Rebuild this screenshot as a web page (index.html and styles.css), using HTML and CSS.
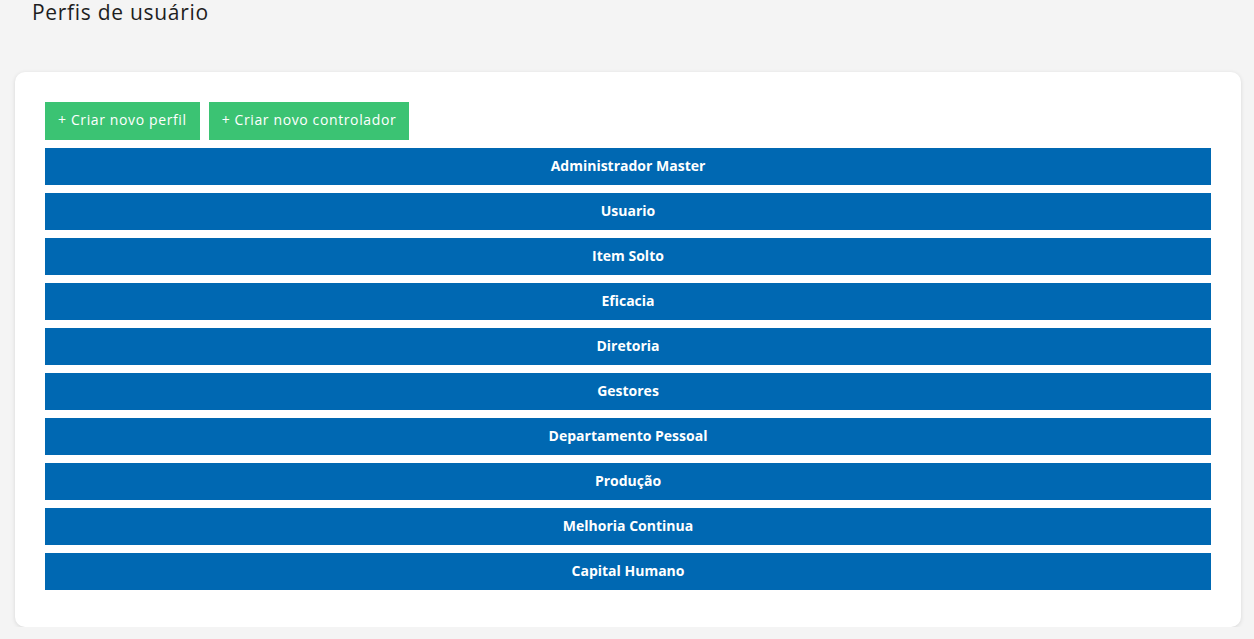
FILE: index.html
```html
<!DOCTYPE html>
<html lang="pt-BR">
<head>
<meta charset="utf-8">
<title>Perfis de usuário</title>
<link rel="stylesheet" href="styles.css">
</head>
<body>
<header class="page-header">
  <h1 class="page-title">Perfis de usuário</h1>
</header>
<main class="card">
  <div class="actions">
    <button class="btn-green">+ Criar novo perfil</button>
    <button class="btn-green">+ Criar novo controlador</button>
  </div>
  <ul class="profile-list">
    <li class="profile">Administrador Master</li>
    <li class="profile">Usuario</li>
    <li class="profile">Item Solto</li>
    <li class="profile">Eficacia</li>
    <li class="profile">Diretoria</li>
    <li class="profile">Gestores</li>
    <li class="profile">Departamento Pessoal</li>
    <li class="profile">Produção</li>
    <li class="profile">Melhoria Continua</li>
    <li class="profile">Capital Humano</li>
  </ul>
</main>
</body>
</html>
```

FILE: styles.css
```css
* { box-sizing: border-box; }
html, body {
  margin: 0;
  padding: 0;
  background: #f4f4f4;
  font-family: "Open Sans", "Noto Sans", sans-serif;
}
body {
  padding: 0 13px 0 15px;
}
.page-header {
  height: 72px;
  padding-left: 17px;
}
.page-title {
  margin: 0;
  font-size: 21px;
  line-height: 24px;
  font-weight: 400;
  letter-spacing: 0.7px;
  color: #1e1e1e;
}
.card {
  background: #fff;
  border-radius: 10px;
  box-shadow: 0 1px 4px rgba(0,0,0,0.12);
  padding: 30px 30px 37px 30px;
}
.actions {
  display: flex;
  gap: 9px;
  margin-bottom: 8px;
}
.btn-green {
  background: #3bc373;
  color: #fff;
  border: 0;
  height: 38px;
  padding: 0 13px 3px;
  font-family: inherit;
  font-size: 14px;
  letter-spacing: 0.62px;
  cursor: pointer;
}
.profile-list {
  list-style: none;
  margin: 0;
  padding: 0;
  display: flex;
  flex-direction: column;
  gap: 8px;
}
.profile {
  background: #0068b2;
  color: #fff;
  height: 37px;
  padding-bottom: 2px;
  display: flex;
  align-items: center;
  justify-content: center;
  font-size: 14px;
  font-weight: 700;
}
```
